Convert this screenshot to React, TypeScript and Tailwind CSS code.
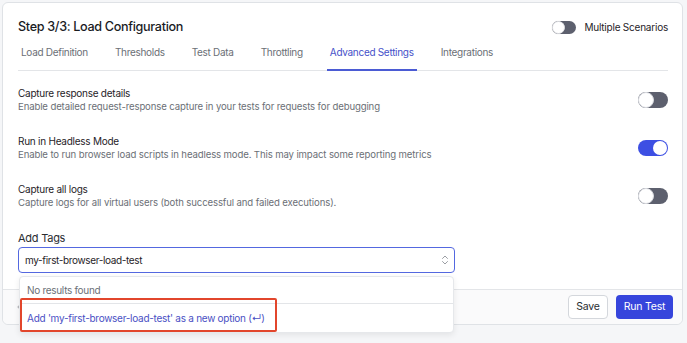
import React from "react";
import { ChevronsUpDown, ChevronLeft } from "lucide-react";

function Toggle({ on = false, small = false }: { on?: boolean; small?: boolean }) {
  if (small) {
    return (
      <div className="relative w-[24px] h-[13px] rounded-full bg-[#5d606e]">
        <div className="absolute left-0 top-0 w-[13px] h-[13px] rounded-full bg-white border border-[#e3e4e8] shadow-[0_0_1px_rgba(0,0,0,0.2)]" />
      </div>
    );
  }
  return (
    <div
      className={
        on
          ? "relative w-[30px] h-[16px] rounded-full bg-[#3d4fe3]"
          : "relative w-[30px] h-[16px] rounded-full bg-[#5d606e]"
      }
    >
      <div
        className={
          on
            ? "absolute right-[1px] top-[1px] w-[14px] h-[14px] rounded-full bg-white"
            : "absolute left-0 top-0 w-[16px] h-[16px] rounded-full bg-white border border-[#d9dbe0]"
        }
      />
    </div>
  );
}

function SettingRow({ title, desc, on }: { title: string; desc: string; on?: boolean }) {
  return (
    <div className="flex items-center justify-between">
      <div className="flex flex-col">
        <div className="text-[10px] leading-[13px] tracking-[-0.25px] text-[#1f2328]">{title}</div>
        <div className="text-[9.6px] leading-[13px] tracking-[-0.13px] text-[#6b6f76]">{desc}</div>
      </div>
      <Toggle on={on} />
    </div>
  );
}

export default function App() {
  const tabs = [
    "Load Definition",
    "Thresholds",
    "Test Data",
    "Throttling",
    "Advanced Settings",
    "Integrations",
  ];
  return (
    <div className="w-[687px] h-[343px] bg-[#f5f6f8] pt-[2px] pl-[2px] overflow-hidden font-['Inter',sans-serif]">
      <div className="w-[681px] h-[323px] bg-white border border-[#dfe2e6] rounded-[6px] flex flex-col">
        <div className="pl-[15px] pr-[14px] pt-[16px]">
          <div className="flex items-center justify-between h-[16px]">
            <div className="text-[12.6px] leading-[16px] tracking-[-0.32px] text-[#1a1c1f] font-medium">
              Step 3/3: Load Configuration
            </div>
            <div className="flex items-center gap-[8px]">
              <Toggle small />
              <span className="text-[10px] leading-[13px] tracking-[-0.22px] text-[#1f2328]">Multiple Scenarios</span>
            </div>
          </div>
          <div className="mt-[10px] flex gap-[21px] border-b border-[#e3e5e8]">
            {tabs.map((t) => (
              <div
                key={t}
                className={
                  t === "Advanced Settings"
                    ? "px-[3px] pb-[10px] -mb-px border-b-2 border-[#4b5bd4] text-[10px] leading-[14px] tracking-[-0.3px] text-[#4651c9]"
                    : "px-[3px] pb-[10px] -mb-px border-b-2 border-transparent text-[10px] leading-[14px] tracking-[-0.3px] text-[#6b6f76]"
                }
              >
                {t}
              </div>
            ))}
          </div>
          <div className="pt-[16px] flex flex-col gap-[22px]">
            <SettingRow
              title="Capture response details"
              desc="Enable detailed request-response capture in your tests for requests for debugging"
            />
            <SettingRow
              title="Run in Headless Mode"
              desc="Enable to run browser load scripts in headless mode. This may impact some reporting metrics"
              on
            />
            <SettingRow
              title="Capture all logs"
              desc="Capture logs for all virtual users (both successful and failed executions)."
            />
          </div>
          <div className="mt-[22px] text-[11px] leading-[14px] tracking-[-0.25px] text-[#2a2d31]">Add Tags</div>
          <div className="relative mt-[2px] w-[437px] z-10">
            <div className="h-[26px] border-[1.5px] border-[#5468e0] rounded-[4px] flex items-center justify-between pl-[6px] pr-[3px]">
              <span className="text-[10px] leading-[13px] tracking-[-0.36px] text-[#1f2328]">my-first-browser-load-test</span>
              <ChevronsUpDown size={12} strokeWidth={1.5} color="#7a7e86" />
            </div>
            <div className="absolute left-[1px] right-[1px] top-[29px] bg-white border border-[#e6e8eb] rounded-[4px] shadow-[0_2px_6px_rgba(0,0,0,0.08)]">
              <div className="h-[27px] flex items-center pl-[7px] border-b border-[#e3e5e8] text-[10px] tracking-[-0.3px] text-[#6b6f76]">
                No results found
              </div>
              <div className="h-[28px] flex items-center pl-[7px] text-[10px] tracking-[-0.27px] text-[#4a50c4]">
                Add 'my-first-browser-load-test' as a new option (↵)
              </div>
              <div className="absolute left-0 top-[21px] w-[257px] h-[34px] border-2 border-[#e2462c] rounded-[2px]" />
            </div>
          </div>
        </div>
        <div className="mt-auto h-[35px] border-t border-[#e3e5e8] bg-[#fafafb] rounded-b-[6px] flex items-center justify-between pl-[11px] pr-[9px]">
          <div className="flex items-center gap-[4px] text-[10px] text-[#6b6f76]">
            <ChevronLeft size={10} strokeWidth={1.5} />
            <span>Back</span>
          </div>
          <div className="flex items-center gap-[8px]">
            <button className="h-[24px] w-[40px] bg-white border border-[#d4d7dc] rounded-[4px] text-[10.5px] tracking-[-0.2px] text-[#2a2d31]">
              Save
            </button>
            <button className="h-[24px] w-[57px] bg-[#3645dc] rounded-[4px] text-[10.5px] tracking-[-0.2px] text-white">
              Run Test
            </button>
          </div>
        </div>
      </div>
    </div>
  );
}
